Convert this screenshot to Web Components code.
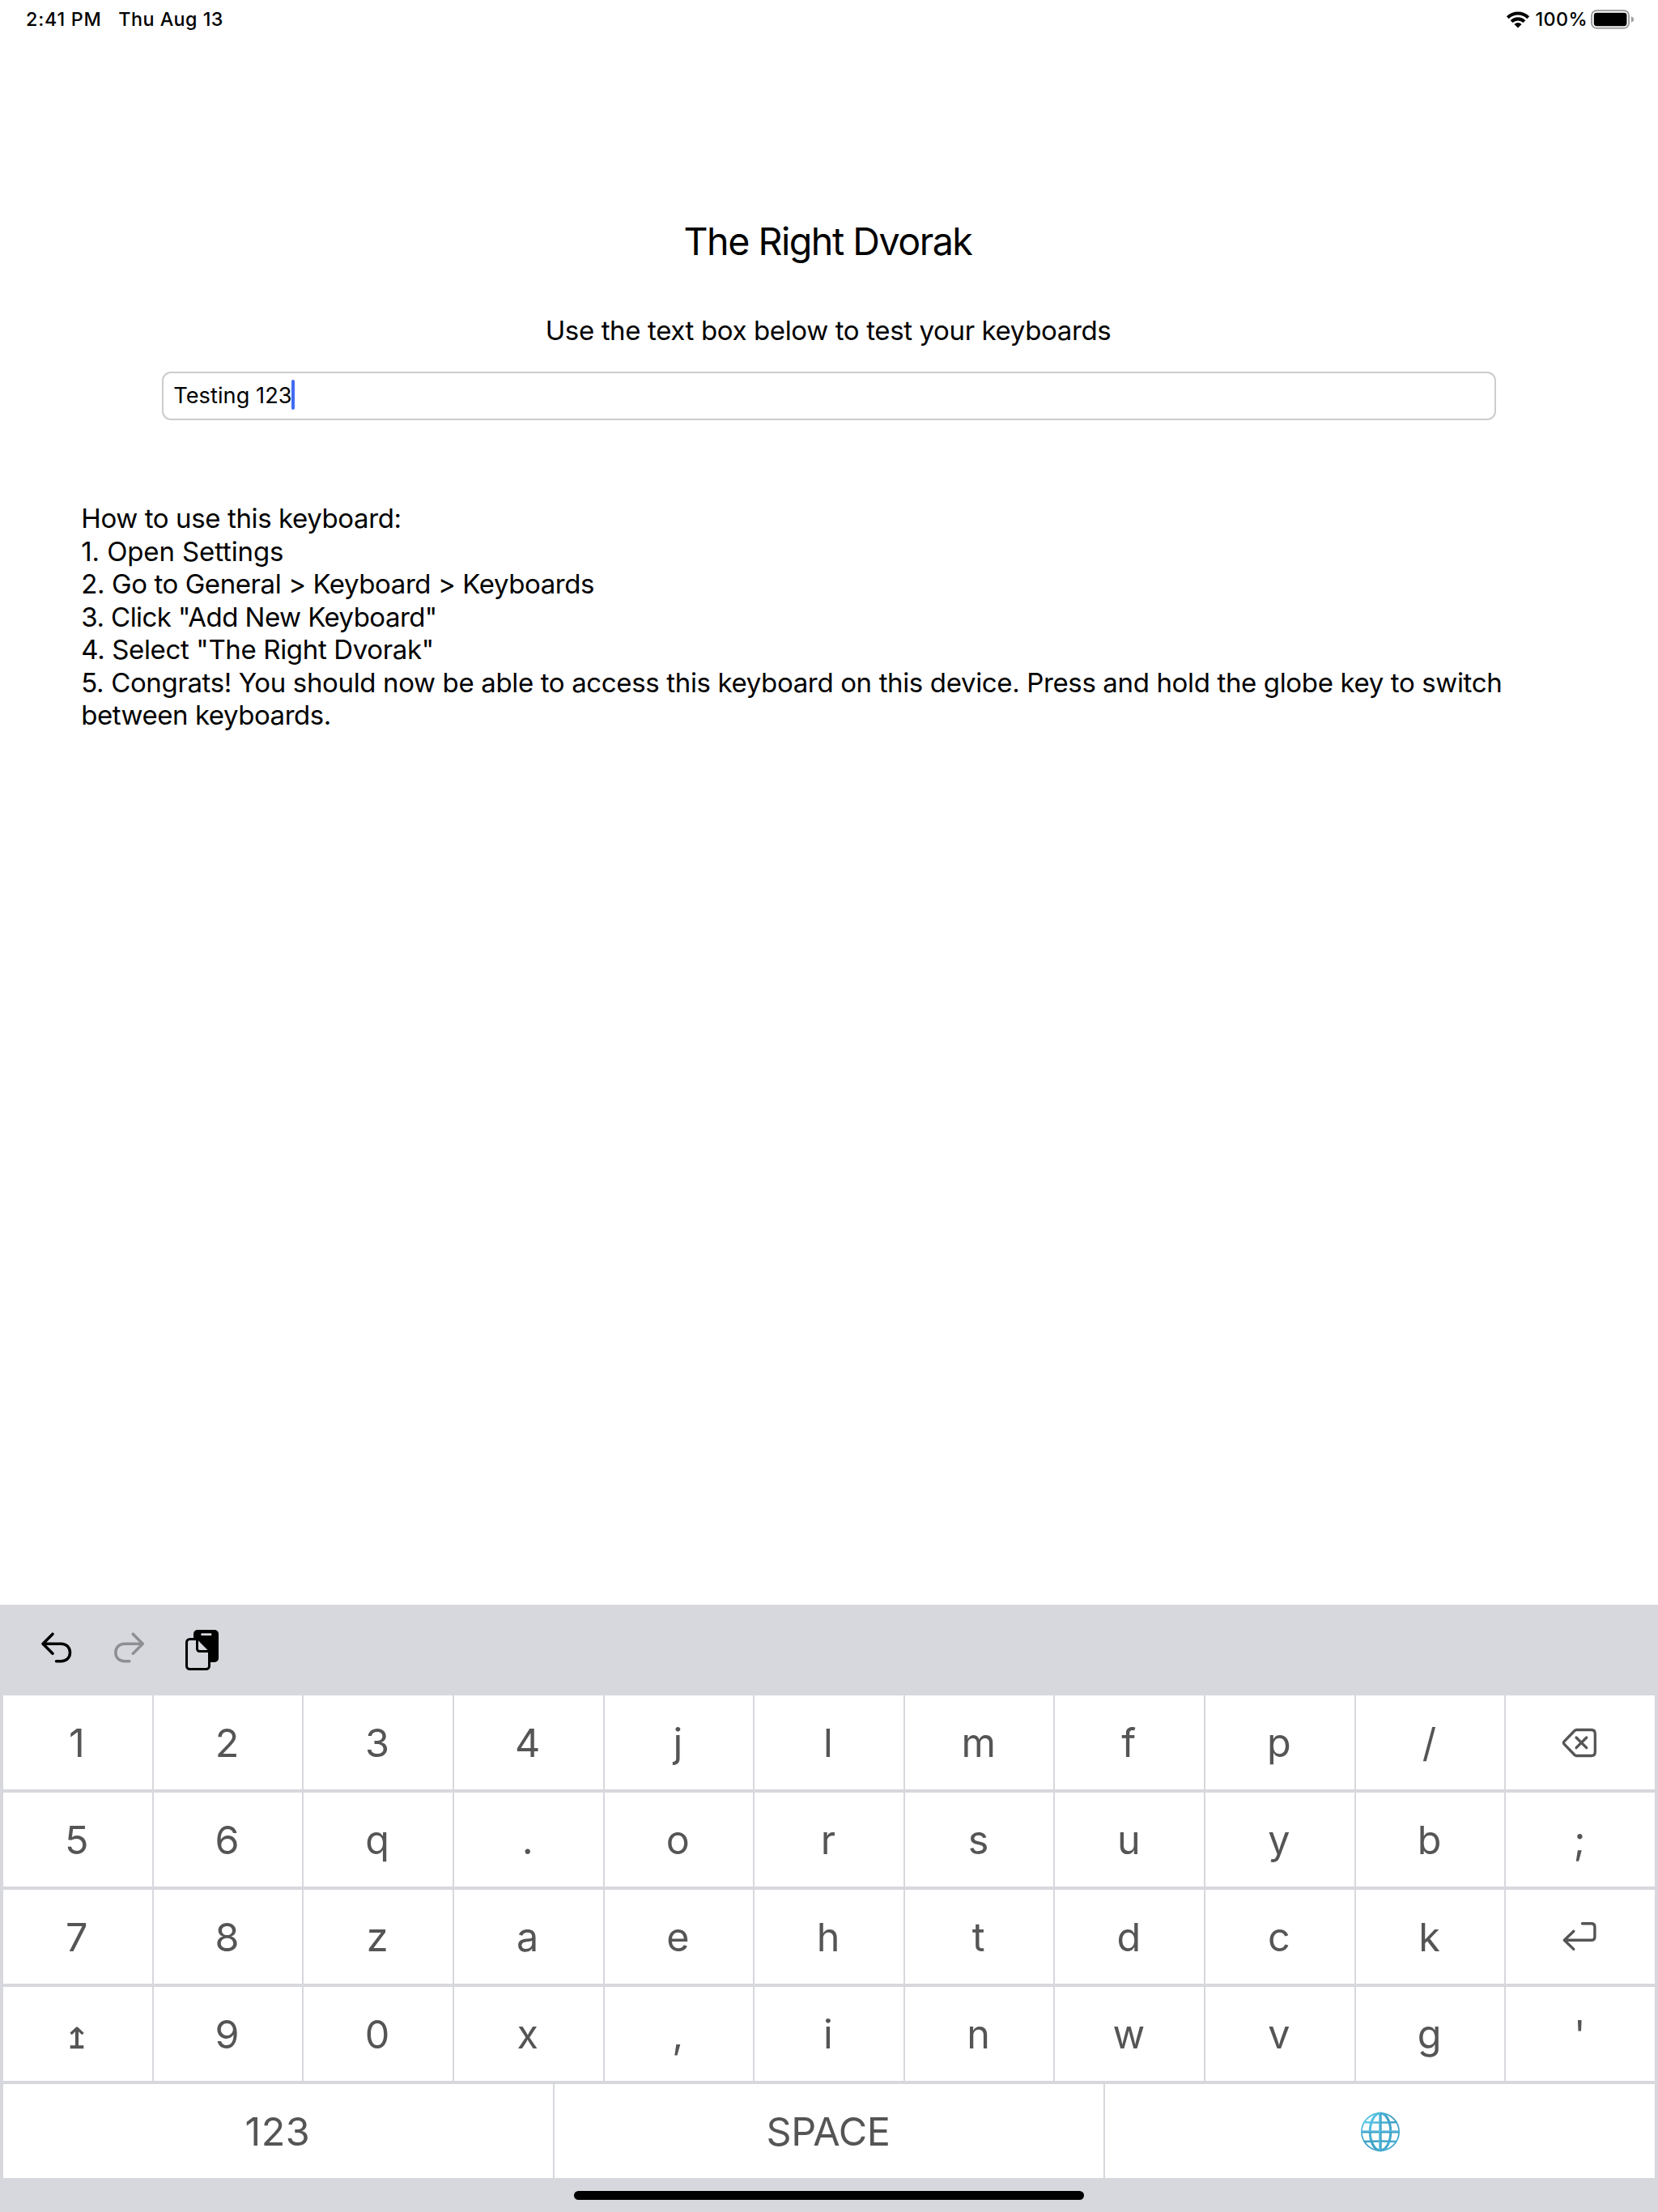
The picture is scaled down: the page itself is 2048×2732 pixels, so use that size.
<!DOCTYPE html>
<html lang="en">
<head>
<meta charset="utf-8">
<title>The Right Dvorak</title>
<style>
html, body { margin: 0; background: #fff; }
body { width: 2048px; height: 2732px; overflow: hidden; font-family: Inter, "Liberation Sans", sans-serif; color: #000; }
</style>
</head>
<body>
<dvorak-app></dvorak-app>
<script>
const icons = {
  wifi: { w: 30, h: 22, body: '<g fill="none" stroke="#000" stroke-width="4.1"><path d="M2.3 8.7A18.2 18.2 0 0 1 27.7 8.7"/><path d="M7.1 13.6A11.3 11.3 0 0 1 22.9 13.6"/></g><path d="M10.5 16.9A6.4 6.4 0 0 1 19.5 16.9L15 21.4Z"/>' },
  battery: { w: 54, h: 24, body: '<rect x="1" y="1" width="46" height="21.8" rx="6.2" fill="none" stroke="#a0a0a0" stroke-width="2"/><rect x="3.8" y="3.8" width="40.6" height="16.4" rx="3.4"/><path d="M49.8 8.2Q53.2 9.6 53.2 12T49.8 15.8Z" fill="#a0a0a0"/>' },
  undo: { w: 40, h: 40, body: '<path d="M17 3.5L5 15.5L17 27.5M5 15.5H27.5C34 15.5 38.5 20 38.5 26.3S34 37 27.5 37H21.5" transform="translate(-2 -.3)" fill="none" stroke="currentColor" stroke-width="3.5" stroke-linecap="round" stroke-linejoin="round"/>' },
  redo: { w: 40, h: 40, body: '<path d="M23 3.5L35 15.5L23 27.5M35 15.5H12.5C6 15.5 1.5 20 1.5 26.3S6 37 12.5 37H18.5" transform="translate(3.3 -.3)" fill="none" stroke="currentColor" stroke-width="3.5" stroke-linecap="round" stroke-linejoin="round"/>' },
  paste: { w: 41, h: 50, body: '<rect x="10" width="31" height="40" rx="5"/><rect x="19.3" y="4.3" width="13" height="2.8" rx=".8" fill="#d7d8dd"/><path d="M15.2 12.6L28.4 26V46L26 48.5H4L1.5 46V14L4 11.5H14Z" fill="#d7d8dd"/><path d="M14.5 11.5H5.5A4 4 0 0 0 1.5 15.5V44.5A4 4 0 0 0 5.5 48.5H25.5A4 4 0 0 0 29.5 44.5V26.5H17.5A3 3 0 0 1 14.5 23.5Z" fill="none" stroke="#000" stroke-width="3"/>' },
  backspace: { w: 44, h: 38, body: '<g fill="none" stroke="currentColor" stroke-width="3.3" stroke-linecap="round" stroke-linejoin="round"><path d="M18.5 2.5H36.5Q41.3 2.5 41.3 7.3V29.7Q41.3 34.5 36.5 34.5H18.5Q17 34.5 16 33.5L3.1 20.2Q1.7 18.5 3.1 16.8L16 3.5Q17 2.5 18.5 2.5Z"/><path d="M18 12L30.7 24.7M30.7 12L18 24.7"/></g>' },
  enter: { w: 44, h: 38, body: '<path d="M14.8 11.2L3.3 22.3L14.8 33.4M3.3 22.3H36.5Q40.9 22.3 40.9 18V6Q40.9 1.8 36.5 1.8H25.5" fill="none" stroke="currentColor" stroke-width="3.4" stroke-linecap="round" stroke-linejoin="round"/>' },
  shift: { w: 20, h: 30, body: '<g fill="none" stroke="currentColor" stroke-width="4"><path d="M10 3.8V26"/><path d="M2.5 11L10 4L17.5 11" stroke-width="3.4" stroke-linejoin="round"/><path d="M1.7 27.2H18.3"/></g>' },
  globe: { w: 50, h: 50, body: '<defs><linearGradient id="g" x1="0" y1="0" x2="1" y2="1"><stop offset="0" stop-color="#60cdee"/><stop offset=".5" stop-color="#3c9fc3"/><stop offset="1" stop-color="#45aed5"/></linearGradient></defs><g fill="none" stroke="url(#g)"><circle cx="25" cy="25" r="23.1" stroke-width="1.8"/><ellipse cx="25" cy="25" rx="12.8" ry="23" stroke-width="3"/><path d="M4.8 13Q25 14 45.2 13M4.8 37Q25 36 45.2 37" stroke-width="2.7"/></g><path d="M23.3 2H26.7V48H23.3Z" fill="#3fa3c8"/><path d="M2 23.5H48V26.5H2Z" fill="#3c9dc2"/><path d="M24 2V48M2 24.1H48" stroke="#70d6f3" stroke-width=".9"/>' }
};

class UiIcon extends HTMLElement {
  connectedCallback() {
    const i = icons[this.getAttribute('name')];
    this.attachShadow({ mode: 'open' }).innerHTML = `
      <style>:host { display: block; flex: none; } svg { display: block; overflow: visible; }</style>
      <svg width="${i.w}" height="${i.h}" viewBox="0 0 ${i.w} ${i.h}">${i.body}</svg>`;
  }
}

class StatusBar extends HTMLElement {
  connectedCallback() {
    this.attachShadow({ mode: 'open' }).innerHTML = `
      <style>
        :host { display: flex; align-items: center; height: 47px; font-size: 23.3px; line-height: 28px; font-weight: 500; padding: 0 29.5px 0 32px; white-space: nowrap; box-sizing: border-box; }
        .time { width: 114.3px; letter-spacing: .77px; }
        .date { flex: 1; letter-spacing: .47px; }
        .level { width: 68px; margin-left: 7px; letter-spacing: .42px; }
      </style>
      <span class="time">2:41 PM</span><span class="date">Thu Aug 13</span>
      <ui-icon name="wifi"></ui-icon><span class="level">100%</span><ui-icon name="battery"></ui-icon>`;
  }
}

class TestField extends HTMLElement {
  connectedCallback() {
    this.attachShadow({ mode: 'open' }).innerHTML = `
      <style>
        :host { display: flex; align-items: center; box-sizing: border-box; width: 1648px; height: 60px; border: 2px solid #ccc; border-radius: 11px; padding-left: 12.2px; font-size: 27.2px; line-height: 36px; letter-spacing: .05px; }
        i { width: 4px; height: 37px; border-radius: 2px; background: #426bf2; margin: -3px 0 0 -.8px; }
      </style>
      <span><slot></slot></span><i></i>`;
  }
}

class HowTo extends HTMLElement {
  connectedCallback() {
    this.attachShadow({ mode: 'open' }).innerHTML = `
      <style>
        :host { display: block; font-size: 33px; line-height: 40.5px; white-space: nowrap; }
        ::slotted(p) { margin: 0; letter-spacing: var(--track, -.39px); }
      </style><slot></slot>`;
  }
}

class KeyCap extends HTMLElement {
  connectedCallback() {
    this.attachShadow({ mode: 'open' }).innerHTML = `
      <style>
        :host { display: flex; flex: 1 1 0; min-width: 0; box-sizing: border-box; padding: 2px 2px 0 0; align-items: center; justify-content: center; background: #fff; color: #555; font-size: 48.5px; line-height: 58px; }
      </style><slot></slot>`;
  }
}

class KeyRow extends HTMLElement {
  connectedCallback() {
    this.attachShadow({ mode: 'open' }).innerHTML = `
      <style>:host { display: grid; grid-auto-flow: column; grid-auto-columns: minmax(0, 1fr); gap: 2px; height: 116px; }</style><slot></slot>`;
  }
}

class DvorakKeyboard extends HTMLElement {
  connectedCallback() {
    const icon = (name, style = '') => `<ui-icon name="${name}" style="${style}"></ui-icon>`;
    const rows = [
      ['1', '2', '3', '4', 'j', 'l', 'm', 'f', 'p', '/', icon('backspace')],
      ['5', '6', 'q', '.', 'o', 'r', 's', 'u', 'y', 'b', ';'],
      ['7', '8', 'z', 'a', 'e', 'h', 't', 'd', 'c', 'k', icon('enter')],
      [icon('shift', 'margin-top:5px'), '9', '0', 'x', ',', 'i', 'n', 'w', 'v', 'g', "'"],
      ['<span style="letter-spacing:.4px;margin-left:1px">123</span>', '<span style="letter-spacing:-.39px">SPACE</span>', icon('globe', 'margin-left:2px')]
    ];
    this.attachShadow({ mode: 'open' }).innerHTML = `
      <style>
        :host { display: flex; flex-direction: column; height: 750px; background: #d7d8dd; }
        .tools { height: 112px; display: flex; align-items: flex-start; padding: 31px 0 0 49.7px; box-sizing: border-box; }
        .tools :nth-child(1), .tools :nth-child(2) { margin-top: 2px; }
        .tools :nth-child(2) { color: #8e8f93; margin-left: 48.3px; }
        .tools :nth-child(3) { margin-left: 51px; }
        .rows { display: flex; flex-direction: column; gap: 4px; padding: 0 4px; }
        .home { width: 630px; height: 11px; border-radius: 5.5px; background: #000; margin: 16px auto 0; }
      </style>
      <div class="tools">${icon('undo')}${icon('redo')}${icon('paste')}</div>
      <div class="rows">${rows.map(r => `<key-row>${r.map(k => `<key-cap>${k}</key-cap>`).join('')}</key-row>`).join('')}</div>
      <div class="home"></div>`;
  }
}

class DvorakApp extends HTMLElement {
  connectedCallback() {
    this.attachShadow({ mode: 'open' }).innerHTML = `
      <style>
        :host { display: flex; flex-direction: column; width: 2048px; height: 2732px; background: #fff; }
        main { flex: 1; display: flex; flex-direction: column; align-items: center; padding-top: 221px; }
        h1 { margin: 0 3px 0 0; font-size: 46.6px; line-height: 60px; font-weight: 400; letter-spacing: -1.49px; }
        .hint { margin: 60px 2px 31px 0; font-size: 33px; line-height: 40px; letter-spacing: -.367px; }
        how-to { align-self: stretch; margin: 101px 0 0 100.3px; }
      </style>
      <status-bar></status-bar>
      <main>
        <h1>The Right Dvorak</h1>
        <p class="hint">Use the text box below to test your keyboards</p>
        <test-field>Testing 123</test-field>
        <how-to>
          <p>How to use this keyboard:</p>
          <p style="--track:-.12px">1. Open Settings</p>
          <p style="--track:-.42px">2. Go to General &gt; Keyboard &gt; Keyboards</p>
          <p style="--track:-.55px">3. Click "Add New Keyboard"</p>
          <p style="--track:-.35px">4. Select "The Right Dvorak"</p>
          <p style="--track:-.358px">5. Congrats! You should now be able to access this keyboard on this device. Press and hold the globe key to switch</p>
          <p style="--track:-.47px">between keyboards.</p>
        </how-to>
      </main>
      <dvorak-keyboard></dvorak-keyboard>`;
  }
}

customElements.define('ui-icon', UiIcon);
customElements.define('status-bar', StatusBar);
customElements.define('test-field', TestField);
customElements.define('how-to', HowTo);
customElements.define('key-cap', KeyCap);
customElements.define('key-row', KeyRow);
customElements.define('dvorak-keyboard', DvorakKeyboard);
customElements.define('dvorak-app', DvorakApp);
</script>
</body>
</html>
